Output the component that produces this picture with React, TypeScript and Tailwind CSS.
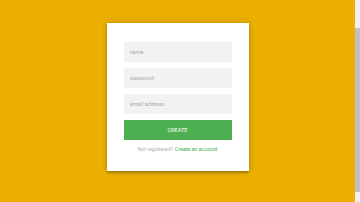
import React from "react";

export default function App() {
  return (
    <div className="flex h-[202px] w-[360px] overflow-hidden font-['Roboto',sans-serif]">
      <div className="flex flex-1 items-start justify-center bg-[#ecb100] pt-[23px]">
        <form
          onSubmit={(e) => e.preventDefault()}
          className="flex w-[142px] flex-col bg-white px-[17px] pb-[19px] pt-[19px] shadow-[0_0_8px_0_rgba(0,0,0,0.2),0_2px_2px_0_rgba(0,0,0,0.24)]"
        >
          <input
            placeholder="name"
            className="mb-[6px] h-[20px] w-full bg-[#f2f2f2] px-[6px] text-[5.6px] text-[#555] outline-none placeholder:text-[#ababab]"
          />
          <input
            type="password"
            placeholder="password"
            className="mb-[6px] h-[20px] w-full bg-[#f2f2f2] px-[6px] text-[5.6px] text-[#555] outline-none placeholder:text-[#ababab]"
          />
          <input
            placeholder="email address"
            className="mb-[6px] h-[20px] w-full bg-[#f2f2f2] px-[6px] text-[5.6px] text-[#555] outline-none placeholder:text-[#ababab]"
          />
          <button
            type="submit"
            className="h-[20px] w-full bg-[#4caf50] text-[5.6px] font-normal uppercase text-white"
          >
            create
          </button>
          <p className="mt-[6px] text-center text-[5.3px] leading-[6px] text-[#b3b3b3]">
            Not registered?{" "}
            <a href="#" className="text-[#4caf50]">
              Create an account
            </a>
          </p>
        </form>
      </div>
      <div className="flex w-[5px] flex-col bg-[#f1f1f1] py-[5px]">
        <div className="mt-[23px] h-[164px] bg-[#c1c1c1]" />
      </div>
    </div>
  );
}
